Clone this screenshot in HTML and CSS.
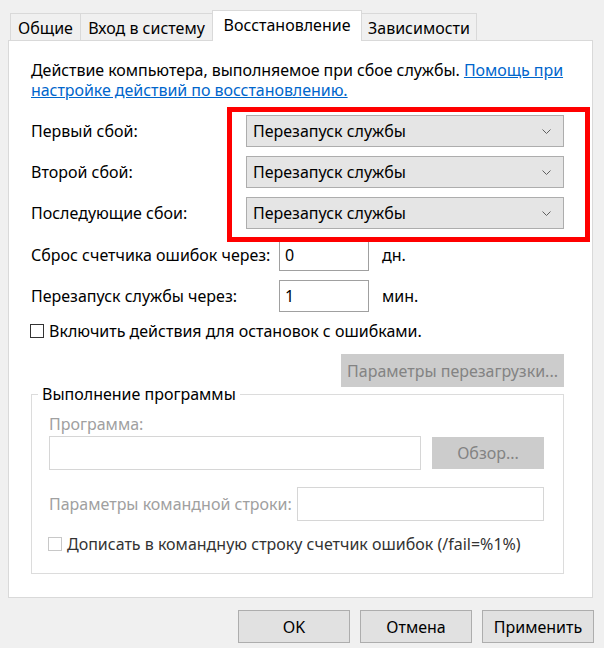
FILE: index.html
```html
<!DOCTYPE html>
<html lang="ru">
<head>
<meta charset="utf-8">
<title>Восстановление</title>
<link rel="stylesheet" href="styles.css">
</head>
<body>
<div class="dialog">
  <div class="tabs">
    <div class="tab t1">Общие</div>
    <div class="tab t2">Вход в систему</div>
    <div class="tab t3 active">Восстановление</div>
    <div class="tab t4">Зависимости</div>
  </div>
  <div class="panel">
    <p class="desc">Действие компьютера, выполняемое при сбое службы. <a class="link" href="#">Помощь при настройке действий по восстановлению.</a></p>
    <div class="combos">
      <div class="row"><span class="label">Первый сбой:</span><div class="combo"><span>Перезапуск службы</span><svg class="chev" width="9" height="5" viewBox="0 0 9 5"><path d="M0.5 0.5 L4.5 4.5 L8.5 0.5" fill="none" stroke="#606060" stroke-width="1"/></svg></div></div>
      <div class="row"><span class="label">Второй сбой:</span><div class="combo"><span>Перезапуск службы</span><svg class="chev" width="9" height="5" viewBox="0 0 9 5"><path d="M0.5 0.5 L4.5 4.5 L8.5 0.5" fill="none" stroke="#606060" stroke-width="1"/></svg></div></div>
      <div class="row"><span class="label">Последующие сбои:</span><div class="combo"><span>Перезапуск службы</span><svg class="chev" width="9" height="5" viewBox="0 0 9 5"><path d="M0.5 0.5 L4.5 4.5 L8.5 0.5" fill="none" stroke="#606060" stroke-width="1"/></svg></div></div>
    </div>
    <div class="highlight"></div>
    <div class="nums">
      <div class="row2 first"><span class="label2">Сброс счетчика ошибок через:</span><div class="textbox">0</div><span class="unit">дн.</span></div>
      <div class="row2"><span class="label2">Перезапуск службы через:</span><div class="textbox">1</div><span class="unit">мин.</span></div>
    </div>
    <div class="check"><span class="box"></span><span>Включить действия для остановок с ошибками.</span></div>
    <div class="right"><div class="btn disabled wide">Параметры перезагрузки...</div></div>
    <fieldset class="group">
      <legend>Выполнение программы</legend>
      <div class="glabel">Программа:</div>
      <div class="prog"><div class="textbox off long"></div><div class="btn disabled browse">Обзор...</div></div>
      <div class="cmd"><span class="glabel">Параметры командной строки:</span><div class="textbox off cmdbox"></div></div>
      <div class="check off"><span class="box"></span><span>Дописать в командную строку счетчик ошибок (/fail=%1%)</span></div>
    </fieldset>
  </div>
  <div class="footer">
    <div class="btn foot">OK</div>
    <div class="btn foot">Отмена</div>
    <div class="btn foot">Применить</div>
  </div>
</div>
</body>
</html>
```
FILE: styles.css
```css
* { box-sizing: border-box; }
html, body { margin: 0; padding: 0; }
body {
  background: #f0f0f0;
  font-family: "Noto Sans", "Liberation Sans", Arial, sans-serif;
  font-size: 16px;
  color: #000;
  width: 604px;
  height: 648px;
  overflow: hidden;
}
.dialog { padding: 10px 11px 0 8px; }
.tabs {
  display: flex;
  padding-left: 2px;
  height: 30px;
  align-items: flex-end;
  position: relative;
  z-index: 2;
}
.tab {
  height: 27px;
  border: 1px solid #d9d9d9;
  border-bottom: none;
  border-right: none;
  background: #f0f0f0;
  display: flex;
  align-items: center;
  justify-content: center;
  line-height: 1;
  padding-top: 1px;
  white-space: nowrap;
}
.t1 { width: 70px; }
.t2 { width: 132px; }
.t3 { width: 150px; }
.t4 { width: 115px; border-right: 1px solid #d9d9d9; }
.tab.active {
  height: 31px;
  background: #fff;
  margin-bottom: -1px;
  border-right: 1px solid #d9d9d9;
  padding-top: 0;
  padding-bottom: 3px;
}
.tab.active + .tab { border-left: none; }
.panel {
  position: relative;
  background: #fff;
  border: 1px solid #d9d9d9;
  height: 558px;
  padding: 19px 28px 0 22px;
}
.desc {
  margin: 0 -24px 0 0;
  line-height: 20px;
  letter-spacing: -0.05px;
}
.link { color: #0066cc; text-decoration: underline; }
.combos {
  margin-top: 15px;
  display: flex;
  flex-direction: column;
  gap: 9px;
}
.row {
  display: grid;
  grid-template-columns: 215px 1fr;
  align-items: center;
  height: 32px;
}
.combo {
  height: 32px;
  background: #e5e5e5;
  border: 1px solid #adadad;
  display: flex;
  align-items: center;
  justify-content: space-between;
  padding: 0 12px 0 6px;
}
.chev { display: block; }
.highlight {
  position: absolute;
  left: 218px;
  top: 66px;
  width: 363px;
  height: 135px;
  border: 5px solid #ff0000;
  pointer-events: none;
}
.nums {
  margin-top: 10px;
  display: flex;
  flex-direction: column;
  gap: 9px;
}
.row2 {
  display: flex;
  align-items: center;
  height: 32px;
}
.label2 { width: 248px; white-space: nowrap; }
.textbox {
  height: 32px;
  border: 1px solid #a0a0a0;
  background: #fff;
  width: 90px;
  padding-left: 5px;
  display: flex;
  align-items: center;
}
.unit { margin-left: 13px; }
.check {
  margin-top: 9px;
  display: flex;
  align-items: center;
  height: 20px;
  gap: 5px;
  white-space: nowrap;
}
.box {
  width: 14px;
  height: 14px;
  border: 1px solid #333;
  background: #fff;
  margin-left: -1px;
  flex: none;
}
.right {
  display: flex;
  justify-content: flex-end;
  margin-top: 13px;
}
.btn {
  display: flex;
  align-items: center;
  justify-content: center;
  background: #e1e1e1;
  border: 1px solid #adadad;
  height: 33px;
  white-space: nowrap;
}
.btn.disabled {
  background: #cccccc;
  border-color: #cccccc;
  color: #838383;
}
.wide { width: 223px; }
.group {
  margin: 0;
  border: 1px solid #dcdcdc;
  padding: 0 19px 19px 17px;
  min-width: 0;
}
.group legend {
  padding: 0 4px;
  margin-left: -11px;
  line-height: 14px;
}
.glabel { color: #a0a0a0; line-height: 20px; white-space: nowrap; }
.group > .glabel { margin-top: 13px; }
.prog {
  margin-top: 2px;
  display: flex;
  align-items: center;
  gap: 11px;
}
.textbox.off { border-color: #d6d6d6; }
.long { width: 372px; height: 34px; }
.browse { width: 112px; height: 32px; }
.cmd {
  margin-top: 17px;
  display: flex;
  align-items: center;
  justify-content: space-between;
}
.cmdbox { width: 247px; height: 34px; }
.check.off { margin-top: 13px; color: #333; }
.check.off .box { border-color: #c8c8c8; }
.footer {
  display: flex;
  justify-content: flex-end;
  gap: 10px;
  margin-top: 12px;
  margin-right: -1px;
}
.foot { width: 112px; height: 33px; }
```
